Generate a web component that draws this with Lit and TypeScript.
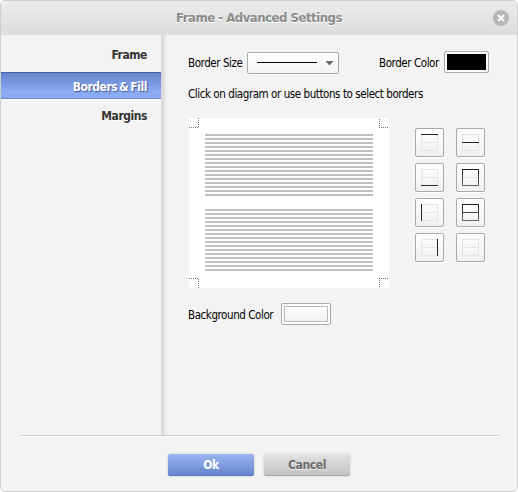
import { LitElement, html, css, svg } from "lit";
import { customElement, property } from "lit/decorators.js";
import { classMap } from "lit/directives/class-map.js";

@customElement("border-button")
class BorderButton extends LitElement {
  @property() lines = "";
  static styles = css`
    :host { display: block; }
    button {
      display: grid; place-items: center; width: 29px; height: 29px; padding: 0;
      box-sizing: border-box; border: 1px solid #a9a9a9; border-radius: 2px;
      background: linear-gradient(#fff, #f0f0f0); box-shadow: 0 1px 0 #fff;
    }
    svg { display: block; }
    .faint { stroke: #e5e5e5; fill: none; }
    .strong { stroke: url(#ink); fill: none; }
  `;
  render() {
    const paths: Record<string, string> = {
      top: "M0 .5H17", middle: "M0 8.5H17", bottom: "M0 16.5H17",
      left: "M.5 0V17", right: "M16.5 0V17",
      box: "M.5 .5H16.5V16.5H.5Z", all: "M.5 .5H16.5V16.5H.5ZM0 8.5H17",
    };
    const d = paths[this.lines];
    return html`<button aria-label=${this.lines || "none"}>
      <svg width="17" height="17" shape-rendering="crispEdges">
        <defs><linearGradient id="ink" gradientUnits="userSpaceOnUse" x1="0" y1="0" x2="0" y2="17">
          <stop stop-color="#1e1e22"></stop><stop offset="1" stop-color=${["box", "all"].includes(this.lines) ? "#68686c" : "#2c2c30"}></stop>
        </linearGradient></defs>
        <path class="faint" d="M.5 .5H16.5V16.5H.5ZM0 8.5H17"></path>
        ${d ? svg`<path class="strong" d=${d}></path>` : ""}
      </svg>
    </button>`;
  }
}

@customElement("app-root")
class AppRoot extends LitElement {
  static styles = css`
    :host { display: block; width: 518px; height: 492px; font: 11.5px "DejaVu Sans Condensed", "DejaVu Sans", sans-serif; font-stretch: condensed; color: #000; }
    * { box-sizing: border-box; }
    button { font: inherit; padding: 0; }
    span { white-space: nowrap; }
    .dialog { display: flex; flex-direction: column; height: 492px; border: 1px solid #cfcfcf; border-radius: 5px; background: #f3f3f3; overflow: hidden; }
    header { display: grid; grid-template-columns: 34px 1fr 34px; align-items: center; flex: none; height: 34px; background: linear-gradient(#ececec, #dcdcdc); }
    h1 { grid-column: 2; margin: 0; text-align: center; font-size: 13px; line-height: 34px; font-weight: bold; color: #8b8b8b; text-shadow: 0 1px 0 #fff; white-space: nowrap; letter-spacing: -.47px; }
    .close { width: 16px; height: 16px; border: 0; background: none; margin-left: 10px; }
    .close svg { display: block; }
    .body { display: flex; height: 400px; flex: none; }
    nav { width: 160px; padding-top: 5px; text-align: right; font-weight: bold; font-size: 12px; color: #333; letter-spacing: -.45px; word-spacing: -1.3px; }
    .tab { height: 30px; line-height: 30px; padding-right: 14px; text-shadow: 0 1px 0 #fff; }
    .tab:first-child { height: 32px; }
    .tab.on { height: 27px; line-height: 29px; color: #fff; background: linear-gradient(#6383cb, #8aabf3 75%); border-top: 1px solid #45619f; border-bottom: 1px solid #6c87c4; box-shadow: 0 1px 0 #fff; text-shadow: 1px 1px 1px #405a94; }
    .tab.on + .tab { line-height: 34px; }
    .shade { width: 6px; background: linear-gradient(90deg, #d9d9d9 30%, #f3f3f3); }
    main { flex: 1; padding: 16px 28px 0 21px; }
    .row { display: flex; }
    .label { line-height: 22px; letter-spacing: -.43px; }
    .size { width: 54px; margin-top: 1px; }
    .color { width: 60px; margin: 1px 5px 0 40px; }
    .back { width: 93px; margin-top: 1px; }
    .select { display: flex; align-items: center; width: 92px; height: 22px; margin: 1px 0 0 5px; border: 1px solid #a9a9a9; border-radius: 2px; background: linear-gradient(#fff, #f3f3f3); }
    .select svg { display: block; }
    .swatch { height: 22px; padding: 2px; border: 1px solid #a9a9a9; border-radius: 2px; background: #fcfcfc; }
    .fill { display: block; height: 16px; }
    .black { width: 39px; background: #000; }
    .white { width: 44px; border: 1px solid #b9b9b9; background: linear-gradient(#fff, #f0f0f0); }
    .hint { margin-top: 9px; height: 22px; }
    .work { margin-top: 13px; gap: 26px; }
    .diagram { display: block; background: #fff; margin-left: 1px; }
    .buttons { display: grid; grid-template-columns: 29px 29px; grid-auto-rows: 29px; gap: 6px 12px; margin-top: 10px; }
    .bg { margin-top: 15px; }
    footer { flex: 1; margin: 0 18px; border-top: 1px solid #cecece; box-shadow: inset 0 1px 0 #fff; padding: 18px 0 0 149px; display: flex; gap: 10px; }
    footer button { width: 86px; height: 22px; border: 0; border-radius: 2px; font-weight: bold; font-size: 12px; line-height: 22px; letter-spacing: -.4px; box-shadow: 0 0 2px #bbb; }
    footer .ok { color: #fff; background: linear-gradient(#9bb5f1, #6686d0); border-bottom: 1px solid #5875b9; }
    footer .cancel { color: #696969; background: linear-gradient(#e2e2e2, #c3c3c3); border-bottom: 1px solid #aaa; text-shadow: 0 1px 0 #eee; }
  `;
  render() {
    const stripes = [16, 91].flatMap((y) => Array.from({ length: 16 }, (_, i) => y + i * 4));
    return html`<div class="dialog">
      <header><h1>Frame - Advanced Settings</h1>
        <button class="close" aria-label="Close"><svg width="16" height="16"><circle cx="8" cy="8" r="8" fill="#b5b5b5"></circle><path d="M5 5L11 11M11 5L5 11" stroke="#fff" stroke-width="2"></path></svg></button>
      </header>
      <div class="body">
        <nav>${["Frame", "Borders & Fill", "Margins"].map((t, i) => html`<div class=${classMap({ tab: true, on: i === 1 })}><span>${t}</span></div>`)}</nav>
        <div class="shade"></div>
        <main>
          <div class="row">
            <span class="label size">Border Size</span>
            <div class="select"><svg width="90" height="20"><path d="M9 9.5H69" stroke="#000" shape-rendering="crispEdges"></path><path d="M73.5 1V19" stroke="#f0f0f0"></path><path d="M77.5 8H85.5L81.5 12.5Z" fill="#666"></path></svg></div>
            <span class="label color">Border Color</span>
            <button class="swatch" aria-label="Border Color"><span class="fill black"></span></button>
          </div>
          <div class="label hint"><span>Click on diagram or use buttons to select borders</span></div>
          <div class="row work">
            <svg class="diagram" width="200" height="170" shape-rendering="crispEdges">
              ${stripes.map((y) => svg`<rect x="16" y=${y} width="168" height="2" fill="#c0c0c0"></rect>`)}
              <path d="M0 9.5H10M9.5 0V9M190 9.5H200M190.5 1V9M0 160.5H10M9.5 161V170M190 160.5H200M190.5 160V170" fill="none" stroke="#777" stroke-dasharray="1 1"></path>
            </svg>
            <div class="buttons">${["top", "middle", "bottom", "box", "left", "all", "right", ""].map((l) => html`<border-button lines=${l}></border-button>`)}</div>
          </div>
          <div class="row bg"><span class="label back">Background Color</span><button class="swatch" aria-label="Background Color"><span class="fill white"></span></button></div>
        </main>
      </div>
      <footer><button class="ok">Ok</button><button class="cancel">Cancel</button></footer>
    </div>`;
  }
}
